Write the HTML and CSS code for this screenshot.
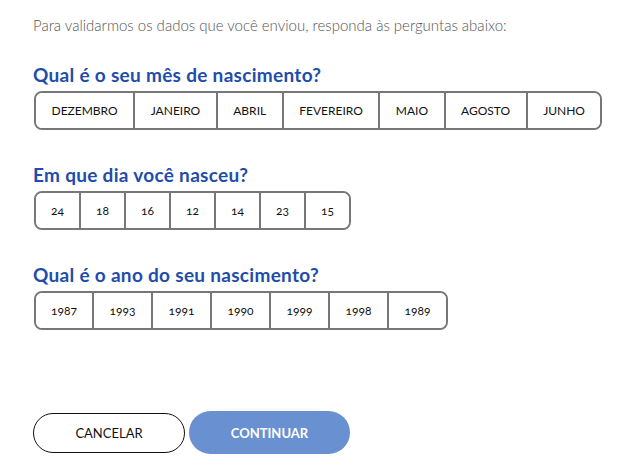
FILE: index.html
```html
<!DOCTYPE html>
<html>
<head>
    <title>Validação de dados</title>
    <link rel="stylesheet" href="styles.css">
</head>
<body>
    <div class="validation">
        <p class="intro">Para validarmos os dados que você enviou, responda às perguntas abaixo:</p>

        <div class="question">
            <h2>Qual é o seu mês de nascimento?</h2>
            <div class="options months">
                <button class="option">DEZEMBRO</button>
                <button class="option">JANEIRO</button>
                <button class="option">ABRIL</button>
                <button class="option">FEVEREIRO</button>
                <button class="option">MAIO</button>
                <button class="option">AGOSTO</button>
                <button class="option">JUNHO</button>
            </div>
        </div>

        <div class="question">
            <h2>Em que dia você nasceu?</h2>
            <div class="options days">
                <button class="option">24</button>
                <button class="option">18</button>
                <button class="option">16</button>
                <button class="option">12</button>
                <button class="option">14</button>
                <button class="option">23</button>
                <button class="option">15</button>
            </div>
        </div>

        <div class="question">
            <h2>Qual é o ano do seu nascimento?</h2>
            <div class="options years">
                <button class="option">1987</button>
                <button class="option">1993</button>
                <button class="option">1991</button>
                <button class="option">1990</button>
                <button class="option">1999</button>
                <button class="option">1998</button>
                <button class="option">1989</button>
            </div>
        </div>

        <div class="actions">
            <button class="btn btn-cancel">CANCELAR</button>
            <button class="btn btn-continue">CONTINUAR</button>
        </div>
    </div>
</body>
</html>
```

FILE: styles.css
```css
body {
    font-family: Lato, "Open Sans", sans-serif;
    margin: 0;
    background-color: #fff;
}
.validation {
    padding: 15px 0 0 34px;
}
.intro {
    margin: 0;
    font-size: 15px;
    line-height: 20px;
    font-weight: 300;
    color: #555;
    margin-left: -1px;
}
.question {
    margin-top: 29px;
}
.question + .question {
    margin-top: 34px;
}
h2 {
    margin: 0 0 5px;
    font-size: 19px;
    line-height: 22px;
    font-weight: 700;
    letter-spacing: 0.3px;
    color: #1e4dab;
    margin-left: -1px;
}
.options {
    display: inline-flex;
    border: 2px solid #777;
    border-radius: 8px;
    overflow: hidden;
}
.option {
    height: 35px;
    padding: 0 15.5px;
    border: none;
    border-left: 2px solid #777;
    background: #fff;
    font-family: inherit;
    font-size: 12px;
    font-weight: 400;
    color: #111;
    cursor: pointer;
    font-variant-numeric: oldstyle-nums;
}
.option:first-child {
    border-left: none;
}
.days .option {
    width: 45px;
    padding: 0;
}
.days .option:first-child {
    width: 43px;
}
.years .option {
    width: 59px;
    padding: 0;
}
.years .option:first-child {
    width: 56px;
}
.actions {
    display: flex;
    align-items: center;
    gap: 4px;
    margin-top: 81px;
    margin-left: -1px;
}
.btn {
    font-family: inherit;
    font-size: 13px;
    border-radius: 22px;
    cursor: pointer;
}
.btn-cancel {
    width: 152px;
    height: 40px;
    background: #fff;
    border: 1px solid #111;
    color: #111;
}
.btn-continue {
    width: 161px;
    height: 43px;
    background-color: #6990d0;
    border: none;
    color: #fff;
    font-weight: 700;
}
```
